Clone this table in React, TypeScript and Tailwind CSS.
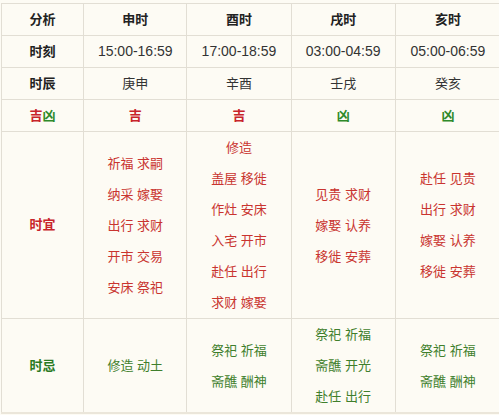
import React from "react";

type Col = {
  name: string;
  time: string;
  ganzhi: string;
  luck: "吉" | "凶";
  yi: string[];
  ji: string[];
};

const cols: Col[] = [
  {
    name: "申时",
    time: "15:00-16:59",
    ganzhi: "庚申",
    luck: "吉",
    yi: ["祈福 求嗣", "纳采 嫁娶", "出行 求财", "开市 交易", "安床 祭祀"],
    ji: ["修造 动土"],
  },
  {
    name: "酉时",
    time: "17:00-18:59",
    ganzhi: "辛酉",
    luck: "吉",
    yi: ["修造", "盖屋 移徙", "作灶 安床", "入宅 开市", "赴任 出行", "求财 嫁娶"],
    ji: ["祭祀 祈福", "斋醮 酬神"],
  },
  {
    name: "戌时",
    time: "03:00-04:59",
    ganzhi: "壬戌",
    luck: "凶",
    yi: ["见贵 求财", "嫁娶 认养", "移徙 安葬"],
    ji: ["祭祀 祈福", "斋醮 开光", "赴任 出行"],
  },
  {
    name: "亥时",
    time: "05:00-06:59",
    ganzhi: "癸亥",
    luck: "凶",
    yi: ["赴任 见贵", "出行 求财", "嫁娶 认养", "移徙 安葬"],
    ji: ["祭祀 祈福", "斋醮 酬神"],
  },
];

const cell = "border border-[#e2ded4] text-center align-middle p-0";
const widths = ["w-[82px]", "w-[103px]", "w-[104px]", "w-[104px]", "w-[105px]"];

export default function App() {
  return (
    <div
      className="w-[499px] h-[415px] bg-[#fdfbf4] pt-[3px] overflow-hidden"
      style={{ fontFamily: '"Liberation Sans", "Noto Sans CJK SC", sans-serif' }}
    >
      <table className="border-collapse table-fixed w-[500px] ml-[1px] text-[13px] text-[#333] border-b-2 border-b-[#ebe6da]">
        <colgroup>
          {widths.map((w, i) => (
            <col key={i} className={w} />
          ))}
        </colgroup>
        <tbody>
          <tr className="h-[32px]">
            <td className={`${cell} font-bold text-[#222]`}>分析</td>
            {cols.map((c) => (
              <td key={c.name} className={`${cell} font-bold text-[#222]`}>
                {c.name}
              </td>
            ))}
          </tr>
          <tr className="h-[32px]">
            <td className={`${cell} font-bold text-[#222]`}>时刻</td>
            {cols.map((c) => (
              <td key={c.name} className={`${cell} text-[14px]`}>
                {c.time}
              </td>
            ))}
          </tr>
          <tr className="h-[32px]">
            <td className={`${cell} font-bold text-[#222]`}>时辰</td>
            {cols.map((c) => (
              <td key={c.name} className={cell}>
                {c.ganzhi}
              </td>
            ))}
          </tr>
          <tr className="h-[32px]">
            <td className={`${cell} font-bold`}>
              <span className="text-[#c8242b]">吉</span>
              <span className="text-[#2f8a2a]">凶</span>
            </td>
            {cols.map((c) => (
              <td
                key={c.name}
                className={`${cell} font-bold ${c.luck === "吉" ? "text-[#c8242b]" : "text-[#2f8a2a]"}`}
              >
                {c.luck}
              </td>
            ))}
          </tr>
          <tr className="h-[187px]">
            <td className={`${cell} font-bold text-[#c8242b]`}>时宜</td>
            {cols.map((c) => (
              <td key={c.name} className={`${cell} text-[#c9342f]`}>
                {c.yi.map((t) => (
                  <div key={t} className="leading-[31px]">
                    {t}
                  </div>
                ))}
              </td>
            ))}
          </tr>
          <tr className="h-[94px]">
            <td className={`${cell} font-bold text-[#2a7a22]`}>时忌</td>
            {cols.map((c) => (
              <td key={c.name} className={`${cell} text-[#3f7f2c]`}>
                {c.ji.map((t) => (
                  <div key={t} className="leading-[31px]">
                    {t}
                  </div>
                ))}
              </td>
            ))}
          </tr>
        </tbody>
      </table>
    </div>
  );
}
